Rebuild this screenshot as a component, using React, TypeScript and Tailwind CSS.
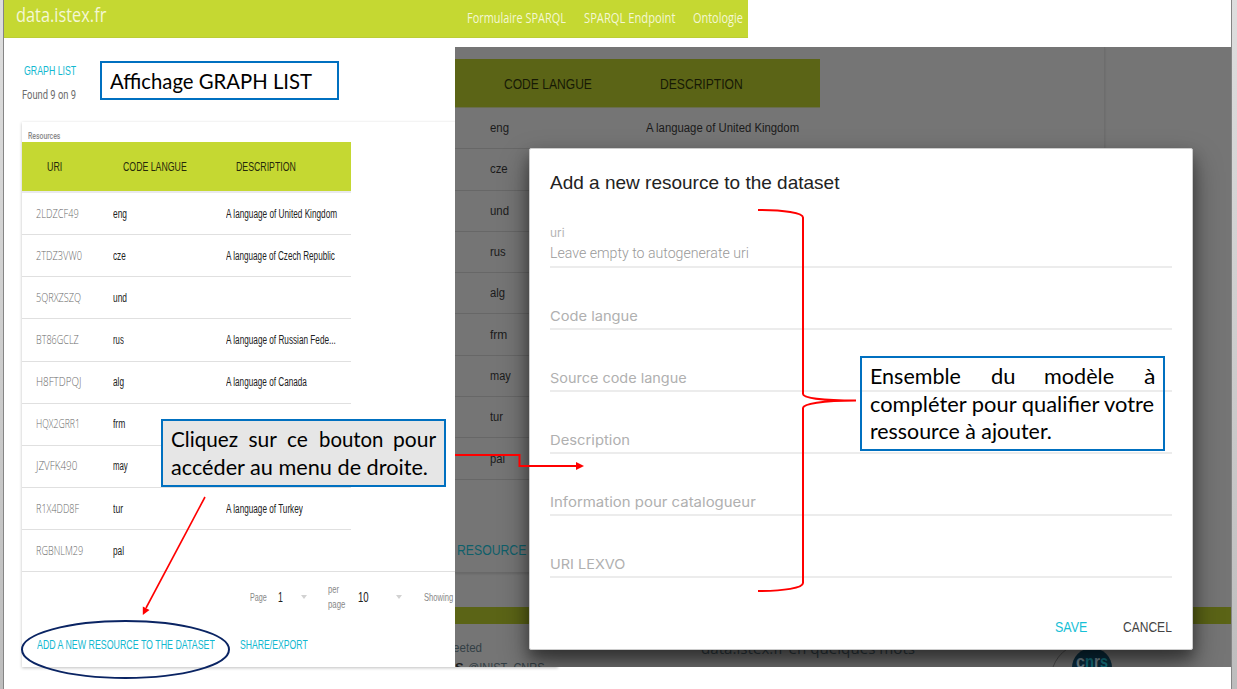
import React, { useLayoutEffect, useRef, useState } from 'react'

type FitProps = { w: number; className?: string; children: React.ReactNode }

/** One line of text, condensed or stretched horizontally to a given width. */
function Fit({ w, className = '', children }: FitProps) {
  const ref = useRef<HTMLSpanElement>(null)
  const [scale, setScale] = useState(1)
  useLayoutEffect(() => {
    if (ref.current && ref.current.offsetWidth) setScale(w / ref.current.offsetWidth)
  }, [w])
  return (
    <span className={`block shrink-0 whitespace-nowrap ${className}`} style={{ width: w }}>
      <span ref={ref} className="inline-block origin-left" style={{ transform: `scaleX(${scale})` }}>
        {children}
      </span>
    </span>
  )
}

type Row = { uri: string; uw: number; code: string; cw: number; rw: number; desc?: string; dw?: number }

const rows: Row[] = [
  { uri: '2LDZCF49', uw: 43, code: 'eng', cw: 14, rw: 19, desc: 'A language of United Kingdom', dw: 111 },
  { uri: '2TDZ3VW0', uw: 46, code: 'cze', cw: 13, rw: 18, desc: 'A language of Czech Republic', dw: 109 },
  { uri: '5QRXZSZQ', uw: 45, code: 'und', cw: 14, rw: 19 },
  { uri: 'BT86GCLZ', uw: 43, code: 'rus', cw: 11, rw: 16, desc: 'A language of Russian Fede...', dw: 110 },
  { uri: 'H8FTDPQJ', uw: 45, code: 'alg', cw: 11, rw: 15, desc: 'A language of Canada', dw: 81 },
  { uri: 'HQX2GRR1', uw: 44, code: 'frm', cw: 12, rw: 17 },
  { uri: 'JZVFK490', uw: 41, code: 'may', cw: 15, rw: 21 },
  { uri: 'R1X4DD8F', uw: 43, code: 'tur', cw: 10, rw: 13, desc: 'A language of Turkey', dw: 77 },
  { uri: 'RGBNLM29', uw: 47, code: 'pal', cw: 11, rw: 15 },
]

const fields = [
  { label: 'Code langue', w: 88 },
  { label: 'Source code langue', w: 137 },
  { label: 'Description', w: 80 },
  { label: 'Information pour catalogueur', w: 206 },
  { label: 'URI LEXVO', w: 75 },
]

function Caret() {
  return (
    <svg width="6" height="4" viewBox="0 0 6 4" className="shrink-0 fill-[#d2d2d2]">
      <path d="M0 0h6L3 4z" />
    </svg>
  )
}

function Header() {
  return (
    <header className="flex h-[38px] w-[744px] items-center border-b border-[#bccd36] bg-[#c5d832] pl-3 font-['Open_Sans',sans-serif] text-[#f4f7d4]">
      <Fit w={90} className="-mt-[7px] mr-[361px] text-[20px] font-medium leading-6">data.istex.fr</Fit>
      <nav className="-mt-0.5 flex gap-[18px] text-sm leading-5">
        <Fit w={99}>Formulaire SPARQL</Fit>
        <Fit w={91}>SPARQL Endpoint</Fit>
        <Fit w={50}>Ontologie</Fit>
      </nav>
    </header>
  )
}

function GraphList() {
  return (
    <section className="w-[451px] pl-[18px] text-[12px] leading-4">
      <div className="flex h-[84px] flex-col pt-[25px]">
        <Fit w={52} className="ml-0.5 text-[13px] text-[#12b8d0]">GRAPH LIST</Fit>
        <Fit w={54} className="mt-2 font-['Roboto',sans-serif] text-[13px] text-[#6c6c6c]">Found 9 on 9</Fit>
      </div>
      <div className="h-[545px] w-[536px] bg-white shadow-[0_1px_3px_rgba(0,0,0,0.25)]">
        <div className="flex h-5 items-center pl-[6px] pt-2">
          <Fit w={32} className="font-['Roboto',sans-serif] text-[9px] font-medium text-[#888]">Resources</Fit>
        </div>
        <div className="flex h-[49px] w-[329px] items-center bg-[#c5d832] pl-[25px] text-[13px] text-[#25290a]">
          <Fit w={15} className="mr-[61px]">URI</Fit>
          <Fit w={64} className="mr-[49px]">CODE LANGUE</Fit>
          <Fit w={60}>DESCRIPTION</Fit>
        </div>
        <div className="h-0.5 w-[329px] bg-[#e9e9ee]" />
        {rows.map((r, i) => (
          <div
            key={r.uri}
            className={`flex h-[42.15px] items-center border-b border-[#e0e0e0] pl-3.5 ${i === rows.length - 1 ? 'w-full' : 'w-[329px]'}`}
          >
            <div className="w-[77px] font-['Open_Sans',sans-serif] font-light text-[#6a6a6a]">
              <Fit w={r.uw}>{r.uri}</Fit>
            </div>
            <div className="w-[113px] text-[#222]">
              <Fit w={r.cw}>{r.code}</Fit>
            </div>
            {r.desc && <Fit w={r.dw!} className="text-[#222]">{r.desc}</Fit>}
          </div>
        ))}
        <div className="flex h-[50px] items-center pl-[228px] text-[11px] text-[#888]">
          <Fit w={17}>Page</Fit>
          <Fit w={5} className="ml-[11px] mr-[18px] text-[14px] text-[#222]">1</Fit>
          <Caret />
          <div className="ml-[21px] w-[30px] leading-[15px]">
            <Fit w={11}>per</Fit>
            <Fit w={17}>page</Fit>
          </div>
          <Fit w={11} className="mr-[27px] text-[14px] text-[#222]">10</Fit>
          <Caret />
          <Fit w={29} className="ml-[22px]">Showing</Fit>
        </div>
        <div className="flex h-[46px] items-center gap-[25px] pl-[15px] text-[13px] text-[#12b8d0]">
          <Fit w={178}>ADD A NEW RESOURCE TO THE DATASET</Fit>
          <Fit w={68}>SHARE/EXPORT</Fit>
        </div>
      </div>
    </section>
  )
}

function Dialog() {
  return (
    <div className="absolute left-[74px] top-[101px] h-[502px] w-[664px] rounded-[2px] border border-[#ccc] bg-white px-5 shadow-[0_14px_30px_rgba(0,0,0,0.4),0_8px_14px_rgba(0,0,0,0.35)]">
      <div className="flex h-[67px] items-center">
        <Fit w={289} className="text-[19px] leading-6 text-[#222]">Add a new resource to the dataset</Fit>
      </div>
      <div className="flex h-[52px] flex-col border-b-2 border-[#ececec] pt-[9px] text-[#b4b4b4]">
        <Fit w={14} className="font-['Inter',sans-serif] text-[11px] leading-4">uri</Fit>
        <Fit w={199} className="mt-0.5 font-['Roboto',sans-serif] text-[14px] font-light leading-5 text-[#999]">Leave empty to autogenerate uri</Fit>
      </div>
      {fields.map((f) => (
        <div key={f.label} className="flex h-[62.1px] items-end border-b-2 border-[#ececec] pb-[2px]">
          <Fit w={f.w} className="font-['Inter',sans-serif] text-[13.5px] leading-5 text-[#b0b0b0]">{f.label}</Fit>
        </div>
      ))}
      <div className="flex h-[98px] items-center justify-end gap-9 text-[14px] leading-5">
        <Fit w={32} className="text-[#16c0d6]">SAVE</Fit>
        <Fit w={49} className="text-[#444]">CANCEL</Fit>
      </div>
    </div>
  )
}

function EditorView() {
  return (
    <section className="relative z-10 mt-[9px] h-[620px] w-[776px] overflow-hidden bg-[#757575] text-[12px] leading-4 text-[#1b1b1b]">
      <div className="flex h-[526px] w-[650px] flex-col border-r border-[#6d6d6d] border-b border-b-[#696969] pt-3 shadow-[0_1px_2px_rgba(0,0,0,0.12)]">
        <div className="flex h-[49px] w-[365px] shrink-0 items-center border-b border-[#696d4e] bg-[#5b6416] pl-[49px] pt-px text-[14px] text-[#171a05]">
          <Fit w={88} className="mr-[68px]">CODE LANGUE</Fit>
          <Fit w={83}>DESCRIPTION</Fit>
        </div>
        {rows.map((r, i) => (
          <div key={r.uri} className="flex h-[41.3px] w-[365px] shrink-0 items-center border-b border-[#676767] pl-[35px]">
            <div className="w-[156px]">
              <Fit w={r.rw}>{r.code}</Fit>
            </div>
            {i === 0 && r.desc && <Fit w={153}>{r.desc}</Fit>}
          </div>
        ))}
        <div className="flex grow items-center pl-0.5 pt-12">
          <Fit w={69} className="text-[14px] text-[#0e5f6a]">RESOURCE</Fit>
        </div>
      </div>
      <div className="mt-[34px] h-[17px] bg-[#5b6416]" />
      <div className="flex h-[43px] pt-[15px]">
        <div className="w-[246px]">
          <Fit w={29} className="-ml-0.5 pt-px text-[12px] text-[#333f45]">eeted</Fit>
          <div className="mt-0.5 flex gap-1 text-[13px] leading-5">
            <span className="font-bold">S</span>
            <Fit w={77} className="text-[#333f45]">@INIST_CNRS</Fit>
          </div>
        </div>
        <Fit w={214} className="-mt-px font-['Open_Sans',sans-serif] text-[15px] leading-5 text-[#333f45]">data.istex.fr en quelques mots</Fit>
        <svg viewBox="0 0 70 28" className="ml-[136px] h-7 w-[70px]">
          <path d="M2 28Q6 17 16 10" fill="none" stroke="#505050" />
          <circle cx="41" cy="29" r="20" fill="#0b2e40" />
          <g fontFamily="Liberation Sans" fontSize="19" fontWeight="bold">
            <text x="25" y="28.500" fill="#7a8f99" textLength="9" lengthAdjust="spacingAndGlyphs">c</text>
            <text x="34" y="28.500" fill="#147a88" textLength="9" lengthAdjust="spacingAndGlyphs">n</text>
            <text x="43" y="28.500" fill="#7a8f99" textLength="6" lengthAdjust="spacingAndGlyphs">r</text>
            <text x="49" y="28.500" fill="#147a88" textLength="8" lengthAdjust="spacingAndGlyphs">s</text>
          </g>
        </svg>
      </div>
      <Dialog />
    </section>
  )
}

function Annotations() {
  return (
    <div className="pointer-events-none absolute inset-0 z-20 font-['Lato',sans-serif] text-[21px] leading-[27.5px] text-black">
      <div className="absolute left-[100px] top-[61px] flex h-[39px] w-[239px] items-center border-2 border-[#0070c0] bg-white pl-2">
        <Fit w={202}>Affichage GRAPH LIST</Fit>
      </div>
      <div className="absolute left-[161px] top-[419px] h-[68px] w-[285px] border-2 border-[#0070c0] bg-[#e6e6e6] px-2 pt-1">
        <div className="flex justify-between">
          <Fit w={67}>Cliquez</Fit>
          <Fit w={28}>sur</Fit>
          <Fit w={21}>ce</Fit>
          <Fit w={64}>bouton</Fit>
          <Fit w={43}>pour</Fit>
        </div>
        <Fit w={257}>accéder au menu de droite.</Fit>
      </div>
      <div className="absolute left-[860px] top-[356px] h-[95px] w-[305px] border-2 border-[#0070c0] px-2 pt-1">
        <div className="flex justify-between">
          <Fit w={91}>Ensemble</Fit>
          <Fit w={24}>du</Fit>
          <Fit w={70}>modèle</Fit>
          <Fit w={11}>à</Fit>
        </div>
        <Fit w={284}>compléter pour qualifier votre</Fit>
        <Fit w={182}>ressource à ajouter.</Fit>
      </div>
      <svg className="absolute inset-0 h-full w-full" viewBox="0 0 1237 689" fill="none" stroke="#f00" strokeWidth="2">
        <path d="M758 210C784 210 803 213 803 217.500V394C803 398 822 400.500 856 400.500C822 400.500 803 404 803 408V583C803 588 784 591 758 591" />
        <path d="M455 455H519.500V466H577" />
        <path d="M576 462v8l8-4z" fill="#f00" stroke="none" />
        <path d="M205 497L146 608" strokeWidth="1.6" />
        <path d="M142.800 615V606.500L149.500 610z" fill="#f00" stroke="none" />
        <ellipse cx="125.500" cy="649.500" rx="103.500" ry="28.500" stroke="#0a2463" />
      </svg>
    </div>
  )
}

export default function App() {
  return (
    <div className="relative flex h-[689px] w-[1237px] overflow-hidden bg-white font-['Liberation_Sans',Arial,sans-serif]">
      <div className="w-1 shrink-0 border-r border-[#858585] bg-linear-to-b from-[#dedede] to-[#bdbdbd]" />
      <main className="w-[1227px] shrink-0">
        <Header />
        <div className="flex">
          <GraphList />
          <EditorView />
        </div>
      </main>
      <div className="w-1.5 shrink-0 border-l border-[#858585] bg-linear-to-b from-[#dedede] to-[#bdbdbd]" />
      <Annotations />
    </div>
  )
}
